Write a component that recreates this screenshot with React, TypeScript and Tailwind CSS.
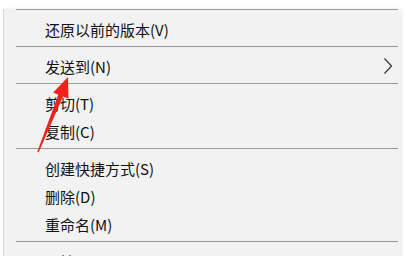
const font = { fontFamily: '"Noto Sans CJK SC", "Noto Sans", sans-serif' };

type Item = { label: string; sub?: boolean } | 'sep';

const items: Item[] = [
  { label: '还原以前的版本(V)' },
  'sep',
  { label: '发送到(N)', sub: true },
  'sep',
  { label: '剪切(T)' },
  { label: '复制(C)' },
  'sep',
  { label: '创建快捷方式(S)' },
  { label: '删除(D)' },
  { label: '重命名(M)' },
  'sep',
  { label: '属性(R)' },
];

export default function App() {
  return (
    <div className="relative h-[256px] w-[407px] overflow-hidden bg-white pt-[9px]" style={font}>
      <div className="ml-[3px] w-[397px] border-l border-[#d4d4d4] bg-[#f2f2f2] shadow-[2px_0_3px_rgba(0,0,0,0.08)]">
        <div className="ml-[12px] mr-[2px] h-px bg-[#9a9a9a]" />
        <div className="h-[4px]" />
        {items.map((it, i) =>
          it === 'sep' ? (
            <div key={i} className="flex h-[9px] items-center pl-[12px] pr-[2px]">
              <div className="h-px w-full bg-[#9a9a9a]" />
            </div>
          ) : (
            <div key={i} className="flex h-[28px] items-center pl-[41px] pr-[4px] text-[15px] leading-none text-[#111]">
              <span className="pt-[3px]">{it.label}</span>
              {it.sub && (
                <svg className="ml-auto mr-[3px] mt-[1px]" width="10" height="18" viewBox="0 0 10 18">
                  <path d="M1.5 1.5 L8.5 9 L1.5 16.5" fill="none" stroke="#333" strokeWidth="1.2" />
                </svg>
              )}
            </div>
          )
        )}
      </div>
      <svg className="pointer-events-none absolute left-0 top-0" width="407" height="256">
        <polygon
          points="68,77 68.5,98.6 63,96.5 38.7,152.3 37.3,151.7 58.3,94.7 53.2,92.6"
          fill="#f0231a"
        />
      </svg>
    </div>
  );
}
